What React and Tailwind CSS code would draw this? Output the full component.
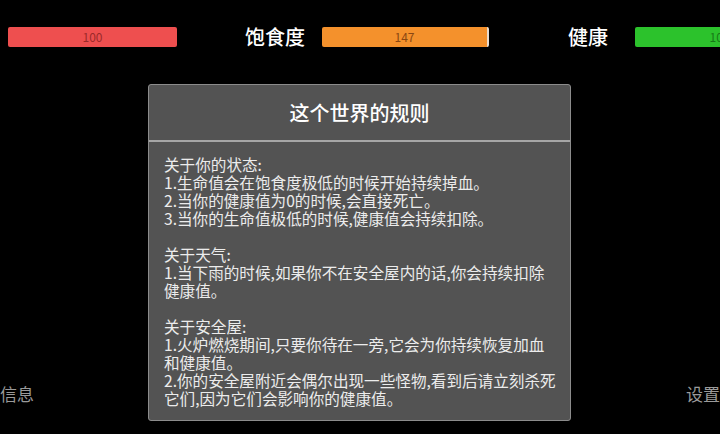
import React from "react";

const FONT = { fontFamily: '"Noto Sans CJK SC", "Noto Sans", sans-serif' };

const RULES = [
  "关于你的状态:",
  "1.生命值会在饱食度极低的时候开始持续掉血。",
  "2.当你的健康值为0的时候,会直接死亡。",
  "3.当你的生命值极低的时候,健康值会持续扣除。",
  "",
  "关于天气:",
  "1.当下雨的时候,如果你不在安全屋内的话,你会持续扣除",
  "健康值。",
  "",
  "关于安全屋:",
  "1.火炉燃烧期间,只要你待在一旁,它会为你持续恢复加血",
  "和健康值。",
  "2.你的安全屋附近会偶尔出现一些怪物,看到后请立刻杀死",
  "它们,因为它们会影响你的健康值。",
];

function Bar({ value, className }) {
  return (
    <div
      className={`flex h-[20px] shrink-0 items-center justify-center rounded-[2px] text-[12px] leading-none ${className}`}
    >
      {value}
    </div>
  );
}

export default function App() {
  return (
    <div
      style={FONT}
      className="flex h-[434px] w-[720px] flex-col overflow-hidden bg-black"
    >
      {/* Stats */}
      <div className="flex h-[47px] shrink-0 items-end overflow-hidden pl-[8px]">
        <Bar value="100" className="w-[169px] bg-[#ee4f4f] text-[#9c2a2a]" />
        <div className="ml-[68px] mr-[17px] flex h-[20px] w-[60px] shrink-0 items-center whitespace-nowrap text-[20px] font-medium leading-none text-white">
          饱食度
        </div>
        <Bar
          value="147"
          className="w-[167px] border-r-2 border-[#e8dccf] bg-[#f4912c] text-[#8a4712]"
        />
        <div className="ml-[79px] mr-[25px] flex h-[20px] w-[42px] shrink-0 items-center whitespace-nowrap text-[20px] font-medium leading-none text-white">
          健康
        </div>
        <Bar value="100" className="w-[169px] bg-[#2cc22c] text-[#177a17]" />
      </div>

      {/* Body row */}
      <div className="flex flex-1 items-start">
        <div className="w-[148px] shrink-0 self-end whitespace-nowrap pb-[32px] text-[17px] leading-none text-[#9a9a9a]">
          信息
        </div>

        {/* Rules dialog */}
        <div className="mt-[37px] flex h-[337px] w-[423px] shrink-0 flex-col rounded-[3px] border border-[#8c8c8c] bg-[#535353]">
          <div className="flex h-[55px] shrink-0 items-center justify-center text-[20px] font-medium text-white">
            这个世界的规则
          </div>
          <div className="h-[2px] shrink-0 bg-[#a6a6a6]" />
          <div className="px-[15px] pt-[13px] text-[15.6px] leading-[18px] text-[#ececec]">
            {RULES.map((line, i) => (
              <div key={i} className="h-[18px] whitespace-nowrap">
                {line}
              </div>
            ))}
          </div>
        </div>

        <div className="flex flex-1 justify-end self-end whitespace-nowrap pb-[32px] text-[17px] leading-none text-[#9a9a9a]">
          设置
        </div>
      </div>
    </div>
  );
}
